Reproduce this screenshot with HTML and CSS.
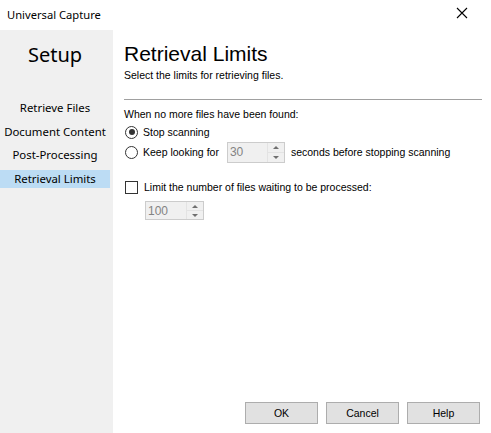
FILE: index.html
```html
<!DOCTYPE html>
<html>
<head>
<meta charset="utf-8">
<link rel="stylesheet" href="styles.css">
</head>
<body>
<div class="window">
  <div class="titlebar">
    <span class="title">Universal Capture</span>
    <svg class="close" width="12" height="12" viewBox="0 0 12 12"><path d="M1 1L11 11M11 1L1 11" stroke="#000" stroke-width="1.1" fill="none"/></svg>
  </div>
  <div class="main">
    <div class="sidebar">
      <div class="setup">Setup</div>
      <div class="nav">
        <div class="nav-item">Retrieve Files</div>
        <div class="nav-item">Document Content</div>
        <div class="nav-item">Post-Processing</div>
        <div class="nav-item selected">Retrieval Limits</div>
      </div>
    </div>
    <div class="content">
      <h1 class="heading">Retrieval Limits</h1>
      <div class="subtitle">Select the limits for retrieving files.</div>
      <div class="separator"></div>
      <div class="label">When no more files have been found:</div>
      <div class="row radio-row">
        <span class="radio checked"></span>
        <span>Stop scanning</span>
      </div>
      <div class="row radio-row2">
        <span class="radio"></span>
        <span>Keep looking for</span>
        <span class="spin spin-sec"><span class="spin-val">30</span><span class="spin-btns"><span class="arr up"></span><span class="arr down"></span></span></span>
        <span class="after">seconds before stopping scanning</span>
      </div>
      <div class="row check-row">
        <span class="check"></span>
        <span>Limit the number of files waiting to be processed:</span>
      </div>
      <div class="row spin-row">
        <span class="spin spin-files"><span class="spin-val">100</span><span class="spin-btns"><span class="arr up"></span><span class="arr down"></span></span></span>
      </div>
      <div class="footer">
        <button class="btn">OK</button>
        <button class="btn">Cancel</button>
        <button class="btn">Help</button>
      </div>
    </div>
  </div>
</div>
</body>
</html>
```
FILE: styles.css
```css
html, body {
  margin: 0;
  padding: 0;
  background: #fff;
}
.window {
  width: 491px;
  height: 433px;
  display: flex;
  flex-direction: column;
  overflow: hidden;
  font-family: "Liberation Sans", Arial, sans-serif;
  font-size: 10.5px;
  color: #000;
}
.titlebar {
  height: 30px;
  flex: none;
  display: flex;
  align-items: center;
  justify-content: space-between;
  padding: 0 23px 0 7px;
}
.title {
  font-family: "Noto Sans", sans-serif;
  font-size: 11.2px;
  margin-top: -2px;
}
.close {
  margin-top: -4px;
}
.main {
  flex: 1;
  display: flex;
}
.sidebar {
  width: 113px;
  flex: none;
  background: #f0f0f0;
  font-family: "Noto Sans", sans-serif;
  display: flex;
  flex-direction: column;
  padding-right: 3px;
  box-sizing: border-box;
}
.setup {
  font-size: 20px;
  text-align: center;
  margin-top: 10px;
  line-height: 30px;
}
.nav {
  margin-top: 29px;
  display: flex;
  flex-direction: column;
}
.nav-item {
  font-size: 11.4px;
  line-height: 18px;
  height: 18px;
  margin-bottom: 5.5px;
  text-align: center;
  white-space: nowrap;
}
.nav-item.selected {
  background: #bcdcf4;
}
.content {
  flex: 1;
  display: flex;
  flex-direction: column;
  padding: 0 9px 9px 11px;
}
.heading {
  font-family: "Liberation Sans", Arial, sans-serif;
  font-weight: normal;
  font-size: 21px;
  margin: 12px 0 0 0;
  line-height: 24px;
}
.subtitle {
  line-height: 13px;
  margin-top: 3px;
}
.separator {
  height: 1px;
  background: #a0a0a0;
  margin-top: 17px;
}
.label {
  margin-top: 8px;
  line-height: 13px;
}
.row {
  display: flex;
  align-items: center;
}
.radio-row {
  margin-top: 3px;
  height: 16px;
  gap: 5px;
  margin-left: 1px;
}
.radio-row2 {
  margin-top: 1px;
  height: 22px;
  margin-left: 1px;
}
.radio-row2 .radio {
  margin-right: 5px;
}
.radio {
  width: 11px;
  height: 11px;
  border: 1px solid #333;
  border-radius: 50%;
  position: relative;
  flex: none;
}
.radio.checked::after {
  content: "";
  position: absolute;
  left: 2.5px;
  top: 2.5px;
  width: 6px;
  height: 6px;
  border-radius: 50%;
  background: #333;
}
.spin {
  display: flex;
  border: 1px solid #ccc;
  background: #f0f0f0;
  height: 19px;
  box-sizing: border-box;
  flex: none;
}
.spin-sec {
  width: 58px;
  margin-left: 8px;
  height: 21px;
}
.spin-files {
  width: 59px;
  margin-left: 21px;
}
.spin-val {
  flex: 1;
  color: #838383;
  font-size: 12px;
  padding-left: 2px;
  line-height: 18px;
}
.spin-btns {
  width: 16px;
  display: flex;
  flex-direction: column;
  border-left: 1px solid #e3e3e3;
  background: #f0f0f0;
}
.arr {
  flex: 1;
  display: flex;
  align-items: center;
  justify-content: center;
}
.arr::before {
  content: "";
  width: 0;
  height: 0;
  border-left: 3.5px solid transparent;
  border-right: 3.5px solid transparent;
}
.arr.up {
  border-bottom: 1px solid #e3e3e3;
}
.arr.up::before {
  border-bottom: 3.5px solid #6f6f6f;
}
.arr.down::before {
  border-top: 3.5px solid #6f6f6f;
}
.after {
  margin-left: 6px;
}
.check-row {
  margin-top: 17px;
  height: 14px;
  gap: 6px;
  margin-left: 1px;
}
.check {
  width: 11px;
  height: 11px;
  border: 1px solid #333;
  flex: none;
}
.spin-row {
  margin-top: 7px;
}
.footer {
  margin-top: auto;
  display: flex;
  justify-content: flex-end;
  gap: 8px;
  margin-right: 2px;
}
.btn {
  width: 73px;
  height: 22px;
  border: 1px solid #adadad;
  background: #e1e1e1;
  font-family: "Liberation Sans", Arial, sans-serif;
  font-size: 10.5px;
  color: #000;
  padding: 0;
  margin: 0;
}
```
